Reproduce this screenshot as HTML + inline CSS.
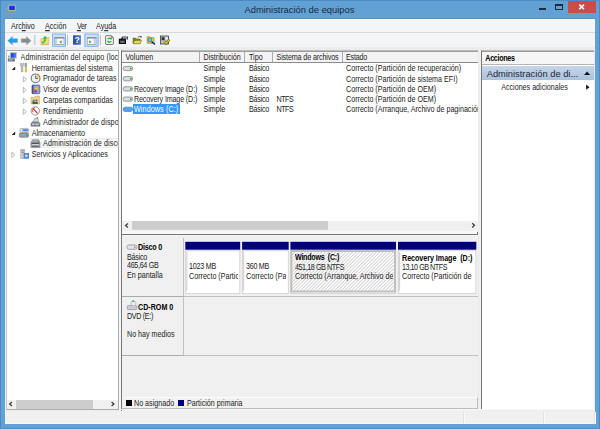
<!DOCTYPE html>
<html lang="es">
<head>
<meta charset="utf-8">
<title>Administración de equipos</title>
<style>
html,body{margin:0;padding:0;}
body{width:600px;height:429px;overflow:hidden;background:#62a1d4;position:relative;
 font-family:"Liberation Sans",sans-serif;font-size:7.15px;color:#111;}
div,span,svg{position:absolute;box-sizing:border-box;}
.t{white-space:nowrap;line-height:10px;height:10px;color:#222;transform:scaleY(1.15);transform-origin:0 75%;}
.b{font-weight:bold;color:#000;}
.w{color:#fff;}
#win{left:0;top:0;width:600px;height:429px;border:1px solid #4b8ac4;}
#title{left:-0.5px;top:3px;width:600px;text-align:center;font-size:9.4px;line-height:14px;color:#1b2a3c;}
#client{left:5px;top:19px;width:590px;height:405px;background:#ececec;}
#tbline{left:4.4px;top:18.2px;width:591.2px;height:2px;background:#5791c8;}
#menubar{left:5px;top:19px;width:590px;height:14px;background:#f4f5f7;border-top:1px solid #fdfdfe;border-bottom:1px solid #d6d7da;}
#toolbar{left:5px;top:33px;width:590px;height:13.5px;background:#f4f5f7;}
.hl{background:#cfe3f7;border:1px solid #7db6ea;}
.sep{width:1px;background:#c9cbce;}
u{text-decoration:underline;}
</style>
</head>
<body>
<div id="win"></div>
<div id="title">Administración de equipos</div>

<div style="left:567.5px;top:0.8px;width:28.4px;height:12.1px;background:#c84d4d;"></div>
<svg style="left:567px;top:0" width="29" height="13" viewBox="0 0 29 13"><path d="M12.3 4.6 L17 9.1 M17 4.6 L12.3 9.1" stroke="#fff" stroke-width="1.5" fill="none"/></svg>
<div style="left:555px;top:3.5px;width:8px;height:6px;border:1px solid #1d2b3b;border-top-width:2px;"></div>
<div style="left:539.3px;top:8.2px;width:7px;height:1.6px;background:#1d2b3b;"></div>
<svg style="left:6px;top:4px" width="11" height="11" viewBox="0 0 11 11"><rect x="2.8" y="1.2" width="6.4" height="5.4" fill="#1a34d2" stroke="#cfc8b8" stroke-width="0.8"/><rect x="0.4" y="6.8" width="6.8" height="3" fill="#8b98a4"/><rect x="0.5" y="3.6" width="1.8" height="1.8" fill="#7ec37e"/></svg>
<div id="tbline"></div><div id="client"></div><div id="menubar"></div><div id="toolbar"></div>
<span class="t " style="left:11px;top:21.80px;">Arc<u>h</u>ivo</span>
<span class="t " style="left:45px;top:21.80px;"><u>A</u>cción</span>
<span class="t " style="left:77px;top:21.80px;letter-spacing:-0.4px"><u>V</u>er</span>
<span class="t " style="left:96px;top:21.80px;">Ay<u>u</u>da</span>
<svg style="left:5px;top:33px" width="180" height="16" viewBox="5 33 180 16">
<path d="M7.7 40.7 L12.4 36.5 L12.4 38.8 L17.5 38.8 L17.5 42.6 L12.4 42.6 L12.4 44.9 Z" fill="#2b9ae8" stroke="#54aeee" stroke-width="0.4"/>
<path d="M31.1 40.7 L26.4 36.5 L26.4 38.8 L21.2 38.8 L21.2 42.6 L26.4 42.6 L26.4 44.9 Z" fill="#8a8a8a" stroke="#a2a2a2" stroke-width="0.4"/>
<rect x="34.4" y="35" width="0.9" height="10" fill="#b4b6b9"/>
<path d="M40.9 38.6 L44.2 38.6 L45.1 37.4 L48.9 37.4 L48.9 44.8 L40.9 44.8 Z" fill="#f0da8c" stroke="#d4b65c" stroke-width="0.6"/>
<rect x="41.2" y="43.6" width="7.4" height="1.2" fill="#d9bc62"/>
<path d="M41.8 42.6 Q44.6 41.4 44.4 38.4 L43.2 38.4 L45 36 L46.8 38.4 L45.8 38.4 Q46 42 42.4 43.4 Z" fill="#2ecb2e" stroke="#24a824" stroke-width="0.3"/>
<rect x="52.6" y="34" width="12.9" height="12.3" fill="#cfe3f8" stroke="#7ab3ee" stroke-width="1"/>
<rect x="54.6" y="37.3" width="9.4" height="7.2" fill="#fdfdfd" stroke="#8b94a2" stroke-width="0.7"/>
<rect x="54.3" y="37" width="10" height="1.7" fill="#8c96a6"/>
<rect x="54.9" y="38.9" width="2.3" height="5.3" fill="#c4d5ea"/>
<path d="M61.6 40.2 L59.3 41.9 L61.6 43.6 Z" fill="#23a523"/>
<rect x="67" y="35" width="0.9" height="10" fill="#b4b6b9"/>
<defs><linearGradient id="hg" x1="0" x2="1" y1="0" y2="0"><stop offset="0" stop-color="#1f3f9f"/><stop offset="1" stop-color="#587ad6"/></linearGradient></defs>
<rect x="73.1" y="35.3" width="7.8" height="9.4" fill="url(#hg)"/>
<text x="77.1" y="43.4" font-size="8.6" font-weight="bold" fill="#fff" text-anchor="middle" font-family="Liberation Sans, sans-serif">?</text>
<rect x="84.8" y="34" width="13.3" height="12.3" fill="#cfe3f8" stroke="#7ab3ee" stroke-width="1"/>
<rect x="87.2" y="37.3" width="8.8" height="7.2" fill="#fdfdfd" stroke="#8b94a2" stroke-width="0.7"/>
<rect x="86.9" y="37" width="9.4" height="1.7" fill="#8c96a6"/>
<rect x="93.6" y="38.9" width="2.2" height="5.3" fill="#c4d5ea"/>
<path d="M89.2 40.2 L91.5 41.9 L89.2 43.6 Z" fill="#23a523"/>
<rect x="99.8" y="35" width="0.9" height="10" fill="#b4b6b9"/>
<path d="M106.2 35.7 L111.4 35.7 L113.3 37.7 L113.3 43.8 Q113.3 44.4 112.7 44.4 L106.2 44.4 Q105.7 44.4 105.7 43.8 L105.7 36.3 Q105.7 35.7 106.2 35.7 Z" fill="#fff" stroke="#55585c" stroke-width="0.85"/>
<path d="M111.2 35.8 L111.2 37.8 L113.2 37.8 Z" fill="#55585c"/>
<path d="M107.7 39.4 A2 2 0 0 1 111.2 38.9 M111.3 40.9 A2 2 0 0 1 107.8 41.4" stroke="#25a825" stroke-width="1.3" fill="none"/>
<path d="M111.9 37.9 L111.6 39.8 L109.9 39.2 Z M107.1 42.4 L107.4 40.5 L109.1 41.1 Z" fill="#25a825"/>
<path d="M118.8 38.7 L126 38.7 L126 44 L118.8 44 Z" fill="#111"/>
<path d="M120.4 38.7 L122.6 36.4 L126.6 36.4 L126.6 39 L126 39.6 Z" fill="#3a3a3a"/>
<rect x="123" y="37" width="3" height="1.5" fill="#9a9a9a"/>
<rect x="120.2" y="40.6" width="4.4" height="2.4" fill="#6a6a6a"/>
<rect x="127" y="36.4" width="0.9" height="3.2" fill="#2a36b0"/>
<path d="M133 38 L135.6 38 L136.4 39 L140.2 39 L140.2 43.6 L133 43.6 Z" fill="#8a841a" stroke="#5e5a10" stroke-width="0.5"/>
<path d="M134.8 40.4 L141.9 40.4 L139.8 43.7 L133 43.7 Z" fill="#e6da5c" stroke="#6e6a12" stroke-width="0.5"/>
<path d="M137.8 37.4 Q139.4 35.6 141 36.8" stroke="#222" stroke-width="0.7" fill="none"/><path d="M141.6 35.9 L141.5 37.8 L139.9 37 Z" fill="#222"/>
<path d="M147.2 36.8 L150 36.8 L150.8 37.7 L154 37.7 L154 43.3 L147.2 43.3 Z" fill="#e8d65a" stroke="#7e7418" stroke-width="0.6"/>
<circle cx="149.9" cy="39.9" r="1.9" fill="#52e0f0" stroke="#2a3a7a" stroke-width="0.6"/>
<path d="M151.6 41.6 L155 44.5" stroke="#1420a0" stroke-width="1.4"/>
<rect x="160.4" y="36" width="8.2" height="8" fill="#c4c6c8" stroke="#3a3c40" stroke-width="0.8"/>
<rect x="161.6" y="37.2" width="3" height="3" fill="#2e3136"/>
<rect x="165.4" y="37.2" width="2.4" height="2.2" fill="#eceeef"/>
<path d="M164.2 41 L166.2 43.4 L169.4 39.6" stroke="#5a5610" stroke-width="2.3" fill="none"/>
<path d="M164.2 41 L166.2 43.4 L169.4 39.6" stroke="#d2c828" stroke-width="1.3" fill="none"/>
</svg>
<div style="left:5.5px;top:50px;width:113.5px;height:360.3px;background:#fff;border:1px solid #a9adb3;border-left-color:#c9ccd0;overflow:hidden;" id="tree"></div>
<div style="left:29.5px;top:138.24px;width:88.5px;height:10px;background:#f8f8f8;border:1px solid #ececec;"></div>
<span class="t" style="left:20.6px;top:52.70px;width:97.4px;overflow:hidden;letter-spacing:0.08px;">Administración del equipo (local)</span>
<span class="t " style="left:31.7px;top:63.53px;">Herramientas del sistema</span>
<span class="t " style="left:43.1px;top:74.36px;">Programador de tareas</span>
<span class="t " style="left:43.1px;top:85.19px;">Visor de eventos</span>
<span class="t " style="left:43.1px;top:96.02px;">Carpetas compartidas</span>
<span class="t " style="left:43.1px;top:106.85px;">Rendimiento</span>
<span class="t" style="left:43.1px;top:117.68px;width:74.9px;overflow:hidden;letter-spacing:0.12px;">Administrador de dispositivos</span>
<span class="t " style="left:31.7px;top:128.51px;">Almacenamiento</span>
<span class="t" style="left:43.1px;top:139.34px;width:74.9px;overflow:hidden;letter-spacing:0.12px;">Administración de discos</span>
<span class="t " style="left:31.7px;top:150.17px;">Servicios y Aplicaciones</span>
<svg style="left:6px;top:50px" width="40" height="112" viewBox="6 50 40 112">
<path d="M15.2 66.43 L15.2 69.93 L11.7 69.93 Z" fill="#262626"/>
<path d="M15.2 131.41 L15.2 134.91 L11.7 134.91 Z" fill="#262626"/>
<path d="M23.3 76.56 L26.4 79.26 L23.3 81.96000000000001 Z" fill="#fff" stroke="#a3a3a3" stroke-width="0.75"/>
<path d="M23.3 87.39 L26.4 90.09 L23.3 92.79 Z" fill="#fff" stroke="#a3a3a3" stroke-width="0.75"/>
<path d="M23.3 98.22 L26.4 100.92 L23.3 103.62 Z" fill="#fff" stroke="#a3a3a3" stroke-width="0.75"/>
<path d="M23.3 109.05 L26.4 111.75 L23.3 114.45 Z" fill="#fff" stroke="#a3a3a3" stroke-width="0.75"/>
<path d="M11.8 152.17000000000002 L14.9 154.87 L11.8 157.57 Z" fill="#fff" stroke="#a3a3a3" stroke-width="0.75"/>
<defs><linearGradient id="sc" x1="0" x2="1"><stop offset="0" stop-color="#1030d0"/><stop offset="1" stop-color="#5a8cee"/></linearGradient></defs><rect x="10.3" y="52.7" width="6.3" height="5.4" fill="url(#sc)" stroke="#cfcabb" stroke-width="0.8"/><rect x="7.8" y="58.4" width="7" height="3.1" fill="#5f7484"/><rect x="8.8" y="59.4" width="4" height="1" fill="#b9c4cc"/><rect x="8" y="55.6" width="1.8" height="1.8" fill="#6cc06c"/>
<path d="M20.3 63.03000000000001 L21.4 63.03000000000001 L21.4 64.63000000000001 L22.7 64.63000000000001 L22.7 63.03000000000001 L23.8 63.03000000000001 L23.8 65.83000000000001 L23 66.63000000000001 L23 72.03 L21.1 72.03 L21.1 66.63000000000001 L20.3 65.83000000000001 Z" fill="#b4b9bf" stroke="#8d9298" stroke-width="0.3"/><rect x="24.6" y="62.93000000000001" width="2.4" height="4.4" fill="#9aa0a7"/><rect x="24.9" y="67.33000000000001" width="1.9" height="5" fill="#e9b21f"/>
<circle cx="35.6" cy="78.36" r="4.4" fill="#eef2f8" stroke="#707479" stroke-width="1.1"/><path d="M35.6 78.36 L35.6 74.66000000000001 A3.7 3.7 0 0 1 39.3 78.36 Z" fill="#f2cf6a"/><path d="M35.6 75.66000000000001 L35.6 78.56 L38 78.56" stroke="#4a4f55" stroke-width="0.8" fill="none"/>
<rect x="32" y="85.09" width="7.8" height="8.6" rx="0.8" fill="#8fa2d4" stroke="#4a5c9e" stroke-width="0.8"/><rect x="32" y="85.09" width="1.5" height="8.6" fill="#3f4f94"/><path d="M36.6 85.89 L38.6 89.29 L34.6 89.29 Z" fill="#f0c93a"/><circle cx="35.4" cy="91.39" r="1.35" fill="#d8342c"/>
<path d="M31 97.32000000000001 L34.4 97.32000000000001 L35.3 96.12 L39.6 96.12 L39.6 103.92 L31 103.92 Z" fill="#ecd27a" stroke="#c4a84c" stroke-width="0.5"/><circle cx="33.6" cy="100.92" r="1.1" fill="#3b8a3b"/><circle cx="36.4" cy="100.52" r="1.1" fill="#4a6ab0"/><rect x="32.4" y="101.92" width="5.4" height="2" fill="#555"/>
<circle cx="35.3" cy="110.95" r="4.2" fill="#fafafa" stroke="#8a8f94" stroke-width="0.9"/><path d="M32.8 108.35 L37.6 113.35" stroke="#d42b2b" stroke-width="1.2"/><path d="M33 112.25 A3 3 0 0 1 35 107.75" stroke="#d42b2b" stroke-width="0.8" fill="none"/>
<path d="M32.4 121.78000000000002 L38.6 121.78000000000002 L40 123.38000000000001 L40 126.18 L31 126.18 L31 123.38000000000001 Z" fill="#7f878f" stroke="#5b6168" stroke-width="0.5"/><rect x="32.2" y="123.58000000000001" width="2.2" height="1.4" fill="#d5dadf"/><rect x="35.4" y="123.58000000000001" width="3.4" height="1.4" fill="#c3c9cf"/><path d="M33 121.78000000000002 L34.6 118.18 L37.8 118.18 L38.6 121.78000000000002 Z" fill="#d2d6db" stroke="#7d838a" stroke-width="0.5"/><rect x="36.6" y="117.18" width="1.5" height="1.5" fill="#45b045"/>
<rect x="20" y="128.41" width="8.6" height="4" rx="1" fill="#dfe3e8" stroke="#8c949b" stroke-width="0.6"/><rect x="22.6" y="129.21" width="5.4" height="2" fill="#3f8fe0"/><rect x="19.4" y="133.01" width="9" height="4.2" rx="1" fill="#9aa2aa" stroke="#5f666d" stroke-width="0.6"/><rect x="26" y="134.41" width="1.6" height="1.4" fill="#35b035"/>
<path d="M32.6 139.64000000000001 L38.6 139.64000000000001 L40 142.84 L40 147.44 L31 147.44 L31 142.84 Z" fill="#a5acb3" stroke="#666c73" stroke-width="0.5"/><rect x="31.6" y="142.64000000000001" width="7.8" height="1.5" fill="#50565c"/><rect x="32" y="144.24" width="7" height="1.2" fill="#e1e4e8"/><rect x="37.6" y="140.64000000000001" width="1.6" height="1.4" fill="#45b045"/><rect x="32" y="145.64000000000001" width="7" height="1" fill="#4c5359"/>
<rect x="20.8" y="149.47" width="3.8" height="9" fill="#c6ccd3" stroke="#8a9199" stroke-width="0.5"/><rect x="21.6" y="150.47" width="2.2" height="0.8" fill="#7b838b"/><rect x="21.6" y="152.07" width="2.2" height="0.8" fill="#7b838b"/><rect x="24" y="153.47" width="4.8" height="4.8" fill="#5d8fd6" stroke="#3a62a8" stroke-width="0.5"/><rect x="25.2" y="154.87" width="2.2" height="1.8" fill="#dfe9f7"/>
</svg>
<div style="left:6.5px;top:399.5px;width:111.5px;height:9.2px;background:#f0f0f0;"></div>
<div style="left:16px;top:399.5px;width:77px;height:9.2px;background:#cdcdcd;"></div>
<svg style="left:6px;top:399px" width="113" height="11" viewBox="6 399 113 11"><path d="M11.9 402.1 L9.7 404.1 L11.9 406.1" stroke="#3c3c3c" stroke-width="1.3" fill="none"/><path d="M111.6 402.1 L113.8 404.1 L111.6 406.1" stroke="#3c3c3c" stroke-width="1.3" fill="none"/></svg>
<div style="left:119px;top:50px;width:2px;height:360px;background:#f6f6f6;"></div>
<div style="left:120.5px;top:50px;width:358.5px;height:360.5px;background:#f0f0f0;border-left:1.3px solid #73767b;border-top:1px solid #bcbcbc;"></div>
<div style="left:122px;top:51px;width:356.5px;height:169.5px;background:#fff;"></div>
<div style="left:122px;top:51px;width:356.5px;height:11.6px;background:#f3f3f3;border-bottom:1.2px solid #8c8c8c;border-top:1px solid #9c9c9c;"></div>
<div class="sep" style="left:199.0px;top:51.5px;height:10.5px;background:#a9acb0;"></div>
<div class="sep" style="left:244.0px;top:51.5px;height:10.5px;background:#a9acb0;"></div>
<div class="sep" style="left:271.5px;top:51.5px;height:10.5px;background:#a9acb0;"></div>
<div class="sep" style="left:341.8px;top:51.5px;height:10.5px;background:#a9acb0;"></div>
<span class="t " style="left:125.5px;top:53.10px;">Volumen</span>
<span class="t " style="left:203.5px;top:53.10px;">Distribución</span>
<span class="t " style="left:249px;top:53.10px;">Tipo</span>
<span class="t " style="left:276.5px;top:53.10px;letter-spacing:-0.12px">Sistema de archivos</span>
<span class="t " style="left:346px;top:53.10px;letter-spacing:-0.2px">Estado</span>
<div style="left:132.7px;top:104.40px;width:47.5px;height:9.6px;background:#3399ff;"></div>
<span class="t " style="left:203.5px;top:64.30px;">Simple</span>
<span class="t " style="left:249px;top:64.30px;letter-spacing:-0.22px">Básico</span>
<span class="t " style="left:346px;top:64.30px;">Correcto (Partición de recuperación)</span>
<span class="t " style="left:203.5px;top:74.50px;">Simple</span>
<span class="t " style="left:249px;top:74.50px;letter-spacing:-0.22px">Básico</span>
<span class="t " style="left:346px;top:74.50px;">Correcto (Partición de sistema EFI)</span>
<span class="t " style="left:134px;top:84.70px;letter-spacing:-0.14px">Recovery Image (D:)</span>
<span class="t " style="left:203.5px;top:84.70px;">Simple</span>
<span class="t " style="left:249px;top:84.70px;letter-spacing:-0.22px">Básico</span>
<span class="t " style="left:346px;top:84.70px;">Correcto (Partición de OEM)</span>
<span class="t " style="left:134px;top:94.90px;letter-spacing:-0.14px">Recovery Image (D:)</span>
<span class="t " style="left:203.5px;top:94.90px;">Simple</span>
<span class="t " style="left:249px;top:94.90px;letter-spacing:-0.22px">Básico</span>
<span class="t " style="left:276.5px;top:94.90px;letter-spacing:-0.5px">NTFS</span>
<span class="t " style="left:346px;top:94.90px;">Correcto (Partición de OEM)</span>
<span class="t w" style="left:134px;top:105.10px;letter-spacing:0.12px">Windows (C:)</span>
<span class="t " style="left:203.5px;top:105.10px;">Simple</span>
<span class="t " style="left:249px;top:105.10px;letter-spacing:-0.22px">Básico</span>
<span class="t " style="left:276.5px;top:105.10px;letter-spacing:-0.5px">NTFS</span>
<span class="t" style="left:346px;top:105.10px;width:132.5px;overflow:hidden;">Correcto (Arranque, Archivo de paginación</span>
<svg style="left:122px;top:62px" width="14" height="54" viewBox="122 62 14 54">
<rect x="123.2" y="66.4" width="9.4" height="4.2" rx="1.8" fill="#d9dce0" stroke="#7f858c" stroke-width="0.8"/><rect x="130" y="67.8" width="1.6" height="1.6" fill="#2fae2f"/>
<rect x="123.2" y="76.60000000000001" width="9.4" height="4.2" rx="1.8" fill="#d9dce0" stroke="#7f858c" stroke-width="0.8"/><rect x="130" y="78.0" width="1.6" height="1.6" fill="#2fae2f"/>
<rect x="123.2" y="86.8" width="9.4" height="4.2" rx="1.8" fill="#d9dce0" stroke="#7f858c" stroke-width="0.8"/><rect x="130" y="88.19999999999999" width="1.6" height="1.6" fill="#2fae2f"/>
<rect x="123.2" y="97.0" width="9.4" height="4.2" rx="1.8" fill="#d9dce0" stroke="#7f858c" stroke-width="0.8"/><rect x="130" y="98.39999999999999" width="1.6" height="1.6" fill="#2fae2f"/>
<rect x="123.2" y="107.2" width="9.4" height="4.2" rx="1.8" fill="#5aa2ea" stroke="#2f7fd0" stroke-width="0.7"/>
</svg>
<div style="left:122px;top:220.5px;width:356.5px;height:10.5px;background:#f0f0f0;"></div>
<svg style="left:122px;top:220px" width="357" height="12" viewBox="122 220 357 12"><rect x="132.1" y="221" width="195.9" height="8.8" fill="#cdcdcd"/></svg>
<svg style="left:122px;top:220px" width="357" height="12" viewBox="122 220 357 12"><path d="M127.9 223.4 L125.6 225.5 L127.9 227.6" stroke="#3c3c3c" stroke-width="1.3" fill="none"/><path d="M472.2 223.2 L474.5 225.3 L472.2 227.4" stroke="#3c3c3c" stroke-width="1.3" fill="none"/></svg>
<div style="left:122px;top:230.5px;width:356px;height:5.5px;background:#f8f8f8;"></div>
<div style="left:122px;top:234px;width:356px;height:1.1px;background:#747474;"></div>
<div style="left:477.2px;top:232px;width:0.9px;height:3px;background:#7a7a7a;"></div>
<div style="left:122px;top:237.5px;width:62.3px;height:59.8px;background:#f0f0f0;border-right:1.3px solid #c0c0c0;border-bottom:1.2px solid #ababab;"></div>
<div style="left:184.3px;top:296.1px;width:294px;height:1.2px;background:#c2c2c2;"></div>
<span class="t b" style="left:138px;top:243.10px;letter-spacing:-0.2px">Disco 0</span>
<span class="t " style="left:127px;top:252.50px;letter-spacing:-0.22px">Básico</span>
<span class="t " style="left:127px;top:261.40px;letter-spacing:-0.3px">465,64 GB</span>
<span class="t " style="left:127px;top:270.70px;">En pantalla</span>
<svg style="left:126px;top:243px" width="12" height="8" viewBox="126 243 12 8"><rect x="127.2" y="245" width="9.6" height="4.2" rx="1.4" fill="#e3e5e8" stroke="#8b9096" stroke-width="0.8"/><rect x="134" y="246.4" width="1.6" height="1.5" fill="#6db76d"/></svg>
<svg style="left:184px;top:238px" width="296" height="60" viewBox="184 238 296 60">
<defs><pattern id="hatch" width="2.4" height="2.4" patternUnits="userSpaceOnUse" patternTransform="rotate(45)"><rect width="2.4" height="2.4" fill="#fdfdfd"/><rect x="0" y="0" width="0.66" height="2.4" fill="#c3c3c3"/></pattern></defs>
<rect x="185.3" y="241.8" width="54.9" height="7.9" fill="#00007f"/>
<rect x="185.70000000000002" y="250.8" width="54.1" height="42.7" fill="#fff" stroke="#cfcfcf" stroke-width="0.8"/>
<path d="M186.9 251.8 L186.9 290.8" stroke="#c9c9c9" stroke-width="0.9"/>
<rect x="242.1" y="241.8" width="46.6" height="7.9" fill="#00007f"/>
<rect x="242.5" y="250.8" width="45.8" height="42.7" fill="#fff" stroke="#cfcfcf" stroke-width="0.8"/>
<path d="M243.7 251.8 L243.7 290.8" stroke="#c9c9c9" stroke-width="0.9"/>
<rect x="290.4" y="241.8" width="105.6" height="7.9" fill="#00007f"/>
<rect x="290.79999999999995" y="250.8" width="104.8" height="42.7" fill="#fff" stroke="#cfcfcf" stroke-width="0.8"/>
<rect x="291.4" y="251" width="103.6" height="40.5" fill="url(#hatch)" stroke="#c0c0c0" stroke-width="2"/>
<rect x="398" y="241.8" width="78.3" height="7.9" fill="#00007f"/>
<rect x="398.4" y="250.8" width="77.5" height="42.7" fill="#fff" stroke="#cfcfcf" stroke-width="0.8"/>
<path d="M399.6 251.8 L399.6 290.8" stroke="#c9c9c9" stroke-width="0.9"/>
</svg>
<span class="t " style="left:189px;top:262.30px;letter-spacing:-0.23px">1023 MB</span>
<span class="t " style="left:189px;top:271.80px;width:48.5px;overflow:hidden;">Correcto (Partición</span>
<span class="t " style="left:246px;top:262.30px;letter-spacing:-0.27px">360 MB</span>
<span class="t " style="left:246px;top:271.80px;width:39.5px;overflow:hidden;">Correcto (Partición</span>
<span class="t b" style="left:295px;top:252.90px;letter-spacing:-0.27px">Windows&nbsp; (C:)</span>
<span class="t " style="left:295px;top:262.70px;letter-spacing:-0.41px">451,18 GB NTFS</span>
<span class="t " style="left:295px;top:271.50px;width:98px;overflow:hidden;">Correcto (Arranque, Archivo de</span>
<span class="t b" style="left:402px;top:253.60px;letter-spacing:-0.03px">Recovery Image&nbsp; (D:)</span>
<span class="t " style="left:402px;top:262.70px;letter-spacing:-0.45px">13,10 GB NTFS</span>
<span class="t " style="left:402px;top:271.90px;width:72px;overflow:hidden;">Correcto (Partición de</span>
<div style="left:122px;top:297.3px;width:62.3px;height:59.2px;background:#f0f0f0;border-right:1.3px solid #c0c0c0;border-bottom:1.2px solid #ababab;"></div>
<div style="left:184.3px;top:355.3px;width:294px;height:1.2px;background:#c2c2c2;"></div>
<span class="t b" style="left:138px;top:302.60px;">CD-ROM 0</span>
<span class="t " style="left:127px;top:312.10px;letter-spacing:-0.32px">DVD (E:)</span>
<span class="t " style="left:127px;top:329.60px;">No hay medios</span>
<svg style="left:126px;top:299px" width="13" height="12" viewBox="126 299 13 12"><rect x="127.2" y="305.6" width="9.6" height="4" rx="1" fill="#c9cdd2" stroke="#8b9096" stroke-width="0.7"/><circle cx="133.5" cy="303.4" r="2.6" fill="#e8eaec" stroke="#9aa0a6" stroke-width="0.6"/><rect x="132.4" y="300.4" width="1.6" height="1.6" fill="#49b249"/></svg>
<div style="left:122px;top:396.6px;width:356px;height:12.2px;background:#f1f1f1;border-top:1px solid #fcfcfc;border-bottom:1px solid #bdbdbd;border-right:1px solid #bdbdbd;"></div>
<div style="left:125.5px;top:400px;width:6.3px;height:6.3px;background:#000;"></div>
<span class="t " style="left:134px;top:399.30px;">No asignado</span>
<div style="left:177.5px;top:400px;width:6.3px;height:6.3px;background:#00007f;"></div>
<span class="t " style="left:187px;top:399.30px;">Partición primaria</span>
<div style="left:478px;top:50px;width:3.5px;height:360.5px;background:linear-gradient(90deg,#e9e9e9,#fafafa);"></div>
<div style="left:481.2px;top:50.2px;width:113.5px;height:360px;background:#fff;border-left:1.5px solid #747474;border-top:1px solid #bcbcbc;"></div>
<div style="left:482.4px;top:51px;width:112.3px;height:14px;background:#f6f6f6;border-bottom:1px solid #b4b4b4;border-top:1px solid #9c9c9c;"></div>
<span class="t b" style="left:485.3px;top:54.20px;letter-spacing:-0.29px">Acciones</span>
<div style="left:482.4px;top:65.5px;width:112.3px;height:14.6px;background:linear-gradient(#c6d6ea,#aac1de);"></div>
<span class="t" style="left:486.7px;top:67.2px;font-size:9.3px;line-height:14px;height:14px;color:#1d2733;transform:none;">Administración de di...</span>
<svg style="left:582px;top:68px" width="12" height="24" viewBox="582 68 12 24"><path d="M584.1 75 L590.1 75 L587.1 71.5 Z" fill="#111"/><path d="M586.1 84.6 L589.5 87.2 L586.1 89.8 Z" fill="#111"/></svg>
<span class="t " style="left:501.2px;top:83.40px;">Acciones adicionales</span>
<div style="left:594px;top:50px;width:1px;height:360px;background:#e4eaf1;"></div>
<div style="left:5px;top:410.5px;width:590px;height:13.7px;background:#f0f0f0;border-bottom:1px solid #f8f8f8;"></div><div style="left:119.2px;top:409.3px;width:475.8px;height:1.2px;background:#f9f9f9;"></div>
<div style="left:462.5px;top:411.5px;width:1px;height:12px;background:#e2e2e2;"></div><div style="left:463.5px;top:411.5px;width:1px;height:12px;background:#fbfbfb;"></div>
<div style="left:542.5px;top:411.5px;width:1px;height:12px;background:#e2e2e2;"></div><div style="left:543.5px;top:411.5px;width:1px;height:12px;background:#fbfbfb;"></div>
<div style="left:593.5px;top:411.5px;width:1px;height:12px;background:#e2e2e2;"></div><div style="left:594.5px;top:411.5px;width:1px;height:12px;background:#fbfbfb;"></div>
</body></html>
